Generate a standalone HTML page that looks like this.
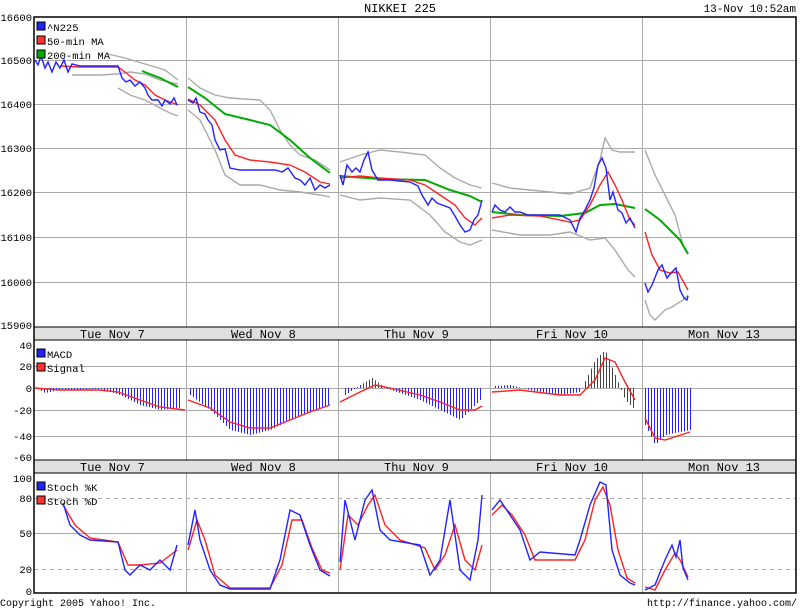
<!DOCTYPE html>
<html><head><meta charset="utf-8"><style>
body{margin:0;background:#fff;}
svg{display:block;font-family:"Liberation Mono","DejaVu Sans Mono",monospace;font-size:12px;}
</style></head><body>
<svg id="s" width="800" height="608" viewBox="0 0 800 608" xmlns="http://www.w3.org/2000/svg">
<rect width="800" height="608" fill="#fff"/>
<text x="400" y="12" text-anchor="middle">NIKKEI 225</text>
<text x="796" y="12" text-anchor="end" font-size="11">13-Nov 10:52am</text>
<g stroke="#aaa" stroke-width="1">
<line x1="34" y1="60.5" x2="796" y2="60.5"/><line x1="34" y1="104.5" x2="796" y2="104.5"/>
<line x1="34" y1="148.5" x2="796" y2="148.5"/><line x1="34" y1="192.5" x2="796" y2="192.5"/>
<line x1="34" y1="237.5" x2="796" y2="237.5"/><line x1="34" y1="282.5" x2="796" y2="282.5"/>
<line x1="186.5" y1="17" x2="186.5" y2="327"/><line x1="338.5" y1="17" x2="338.5" y2="327"/>
<line x1="490.5" y1="17" x2="490.5" y2="327"/><line x1="642.5" y1="17" x2="642.5" y2="327"/>
<line x1="186.5" y1="340" x2="186.5" y2="460"/><line x1="338.5" y1="340" x2="338.5" y2="460"/>
<line x1="490.5" y1="340" x2="490.5" y2="460"/><line x1="642.5" y1="340" x2="642.5" y2="460"/>
<line x1="186.5" y1="473" x2="186.5" y2="593"/><line x1="338.5" y1="473" x2="338.5" y2="593"/>
<line x1="490.5" y1="473" x2="490.5" y2="593"/><line x1="642.5" y1="473" x2="642.5" y2="593"/>
<line x1="34" y1="366.5" x2="796" y2="366.5"/><line x1="34" y1="388.5" x2="796" y2="388.5"/>
<line x1="34" y1="410.5" x2="796" y2="410.5"/><line x1="34" y1="436.5" x2="796" y2="436.5"/>
<line x1="34" y1="533.5" x2="796" y2="533.5"/>
</g>
<g stroke="#aaa" stroke-dasharray="4,4"><line x1="34" y1="498.5" x2="796" y2="498.5"/><line x1="34" y1="569.5" x2="796" y2="569.5"/></g>
<rect x="34" y="327" width="762" height="13" fill="#e0e0e0" stroke="#000"/>
<rect x="34" y="460" width="762" height="13" fill="#e0e0e0" stroke="#000"/>
<g font-size="12">
<text x="80" y="338">Tue Nov  7</text><text x="231" y="338">Wed Nov  8</text><text x="384" y="338">Thu Nov  9</text><text x="536" y="338">Fri Nov 10</text><text x="688" y="338">Mon Nov 13</text>
<text x="80" y="471">Tue Nov  7</text><text x="231" y="471">Wed Nov  8</text><text x="384" y="471">Thu Nov  9</text><text x="536" y="471">Fri Nov 10</text><text x="688" y="471">Mon Nov 13</text>
</g>
<rect x="34" y="17" width="762" height="576" fill="none" stroke="#000" stroke-width="1.5"/>
<g text-anchor="end" font-size="10.5">
<text x="32" y="21">16600</text><text x="32" y="64">16500</text><text x="32" y="108">16400</text><text x="32" y="152">16300</text><text x="32" y="196">16200</text><text x="32" y="241">16100</text><text x="32" y="286">16000</text><text x="32" y="329">15900</text>
<text x="32" y="349">40</text><text x="32" y="370">20</text><text x="32" y="392">0</text><text x="32" y="414">-20</text><text x="32" y="440">-40</text><text x="32" y="461">-60</text>
<text x="32" y="482">100</text><text x="32" y="502">80</text><text x="32" y="537">50</text><text x="32" y="573">20</text><text x="32" y="595">0</text>
</g>
<g id="bars"></g>
<g fill="none" stroke-width="1.4">
<g stroke="#aaa">
<polyline points="72,75 100,75 118,74 130,72 145,74 160,80 178,84"/>
<polyline points="108,54 125,58 145,64 165,70 178,80"/>
<polyline points="118,88 130,95 145,100 160,108 170,113 178,116"/>
<polyline points="188,78 200,88 215,95 230,98 260,100 270,110 280,130 290,145 300,155 315,160 330,170"/>
<polyline points="188,110 200,120 215,150 225,175 240,185 260,185 280,190 300,192 320,195 330,197"/>
<polyline points="340,162 360,155 380,150 400,152 425,155 440,168 455,178 470,185 482,188"/>
<polyline points="340,195 360,200 380,198 410,200 430,215 445,232 460,242 470,245 482,240"/>
<polyline points="492,183 510,188 530,190 570,194 590,188 600,160 605,138 612,150 620,152 635,152"/>
<polyline points="492,230 520,235 550,235 570,232 590,240 605,238 615,250 628,270 635,277"/>
<polyline points="645,150 655,175 665,195 675,215 683,245 688,253"/>
<polyline points="645,300 650,315 655,320 665,310 672,307 683,300 688,295"/>
</g>
<polyline stroke="#00aa00" stroke-width="2" points="142,71 160,78 178,87"/>
<polyline stroke="#00aa00" stroke-width="2" points="188,87 205,98 225,114 250,120 270,125 290,140 310,158 330,173"/>
<polyline stroke="#00aa00" stroke-width="2" points="340,176 380,179 425,180 450,190 470,196 482,202"/>
<polyline stroke="#00aa00" stroke-width="2" points="492,212 520,215 560,216 585,213 600,205 615,204 635,208"/>
<polyline stroke="#00aa00" stroke-width="2" points="645,209 660,220 672,232 680,240 688,254"/>
<polyline stroke="#f22" points="60,66 80,67 100,67 118,67 125,72 135,80 145,85 155,95 165,100 178,105"/>
<polyline stroke="#f22" points="188,99 200,105 215,120 225,140 235,155 250,160 270,162 290,165 305,172 320,182 330,184"/>
<polyline stroke="#f22" points="340,178 360,176 380,178 410,180 425,185 440,195 455,205 465,218 475,225 482,218"/>
<polyline stroke="#f22" points="492,218 510,215 540,216 570,222 580,220 590,205 600,185 608,172 615,185 622,200 630,220 635,225"/>
<polyline stroke="#f22" points="645,232 652,255 660,270 670,273 678,272 688,290"/>
<polyline stroke="#22f" points="35,60 38,65 41,56 45,68 48,62 52,72 56,62 60,68 64,60 68,72 72,64 80,66 100,66 118,66 122,78 126,82 130,80 135,86 140,82 145,88 148,95 152,100 158,100 162,106 165,100 170,104 174,98 177,105"/>
<polyline stroke="#22f" points="188,100 193,103 196,98 200,112 205,114 208,120 212,125 215,140 220,150 225,149 230,168 240,170 260,170 275,170 282,172 288,168 295,178 300,180 305,185 310,178 315,190 320,185 325,188 330,185"/>
<polyline stroke="#22f" points="340,175 343,185 347,165 352,172 356,168 360,172 364,160 368,152 372,170 378,180 390,180 410,182 418,186 422,195 428,205 432,198 437,203 445,206 450,208 455,216 460,225 465,232 470,230 474,220 478,215 482,200"/>
<polyline stroke="#22f" points="492,212 495,205 500,210 505,212 510,207 515,212 520,212 528,215 540,215 560,215 570,220 576,232 580,218 585,210 590,200 594,188 598,165 602,158 606,168 610,200 613,192 618,210 622,213 626,223 630,218 635,228"/>
<polyline stroke="#22f" points="645,283 648,292 652,285 658,270 662,265 667,278 672,272 676,268 680,290 684,298 687,300 688,296"/>
<polyline stroke="#f22" points="35,388 60,390 100,390 118,392 140,400 160,407 185,410"/>
<polyline stroke="#f22" points="188,400 210,408 230,422 250,428 270,428 290,420 310,412 330,405"/>
<polyline stroke="#f22" points="340,402 360,392 375,385 390,388 420,395 440,402 460,410 475,410 482,406"/>
<polyline stroke="#f22" points="492,392 520,390 560,395 580,395 595,380 605,358 615,362 625,382 635,400"/>
<polyline stroke="#f22" points="645,418 655,438 665,440 690,432"/>
<polyline stroke="#f22" points="63,505 75,525 90,538 118,542 128,565 140,565 160,563 177,550"/>
<polyline stroke="#f22" points="188,550 197,520 205,540 215,575 230,588 270,588 282,565 292,520 302,520 312,548 322,570 330,573"/>
<polyline stroke="#f22" points="340,570 348,515 358,525 368,505 375,495 385,525 400,540 425,548 435,570 445,555 455,525 465,560 475,570 482,545"/>
<polyline stroke="#f22" points="492,515 502,505 512,515 525,535 535,560 575,560 585,540 595,500 603,487 610,505 618,550 627,578 635,583"/>
<polyline stroke="#f22" points="645,587 655,590 665,570 675,553 680,560 688,577"/>
<polyline stroke="#22f" points="63,503 70,525 80,535 90,540 118,542 125,570 130,575 140,565 150,570 160,560 170,570 177,545"/>
<polyline stroke="#22f" points="188,545 195,510 200,540 210,570 220,585 230,589 270,589 280,560 290,510 300,515 310,545 320,570 330,576"/>
<polyline stroke="#22f" points="340,562 345,500 355,540 365,500 372,490 380,530 390,540 420,545 430,575 440,560 450,500 460,570 470,580 478,540 482,495"/>
<polyline stroke="#22f" points="492,510 500,500 510,515 520,530 530,560 540,552 575,555 580,540 590,505 600,482 606,485 612,550 620,575 630,583 635,585"/>
<polyline stroke="#22f" points="645,590 655,585 665,560 672,545 676,557 680,540 683,568 688,580"/>
</g>
<g font-size="10.5">
<rect x="37" y="22" width="8" height="8" fill="#22f" stroke="#000"/><text x="47" y="31">^N225</text>
<rect x="37" y="36" width="8" height="8" fill="#f33" stroke="#000"/><text x="47" y="45">50-min MA</text>
<rect x="37" y="50" width="8" height="8" fill="#0a0" stroke="#000"/><text x="47" y="59">200-min MA</text>
<rect x="37" y="349" width="8" height="8" fill="#22f" stroke="#000"/><text x="47" y="358">MACD</text>
<rect x="37" y="363" width="8" height="8" fill="#f33" stroke="#000"/><text x="47" y="372">Signal</text>
<rect x="37" y="482" width="8" height="8" fill="#22f" stroke="#000"/><text x="47" y="491">Stoch %K</text>
<rect x="37" y="496" width="8" height="8" fill="#f33" stroke="#000"/><text x="47" y="505">Stoch %D</text>
<text x="0" y="606" font-size="10">Copyright 2005 Yahoo! Inc.</text>
<text x="797" y="606" text-anchor="end" font-size="10">http://finance.yahoo.com/</text>
</g>
</svg>
<script>
var segs=[[[35,388],[45,393],[60,390],[100,389],[120,395],[140,405],[160,410],[180,408]],
[[190,395],[210,410],[230,430],[250,435],[270,430],[300,415],[330,405]],
[[345,395],[360,385],[372,378],[385,388],[420,400],[440,410],[460,420],[475,405],[482,398]],
[[495,386],[510,385],[530,390],[560,395],[580,392],[595,360],[605,350],[615,375],[625,400],[635,410]],
[[645,425],[655,445],[665,435],[690,430]]];
var d="",g="";
segs.forEach(function(s){for(var x=s[0][0];x<=s[s.length-1][0];x+=3){for(var i=0;i<s.length-1;i++){if(x>=s[i][0]&&x<=s[i+1][0]){var t=(x-s[i][0])/(s[i+1][0]-s[i][0]||1);var y=s[i][1]+t*(s[i+1][1]-s[i][1]);var p="M"+(x+.5)+" 388V"+y.toFixed(1);if((x>360&&x<380)||(x>585&&x<635))g+=p;else d+=p;break;}}}});
document.getElementById("bars").innerHTML='<path d="'+d+'" stroke="#22f" stroke-width="1"/><path d="'+g+'" stroke="#444" stroke-width="1"/>';
</script>
</body></html>
